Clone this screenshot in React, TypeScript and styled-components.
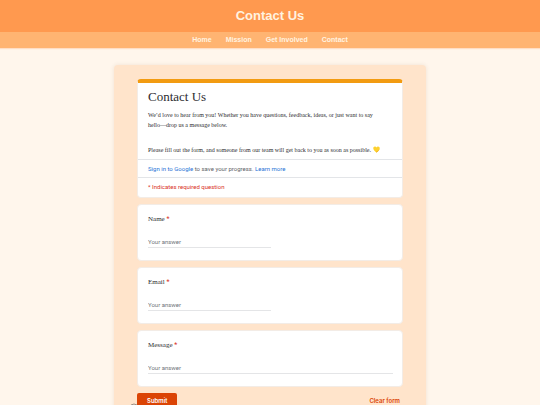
import React from "react";
import styled, { createGlobalStyle } from "styled-components";

const GlobalStyle = createGlobalStyle`
  *, *::before, *::after { box-sizing: border-box; }
  html { scrollbar-width: none; }
  body {
    margin: 0;
    background: #fff6ec;
    font-family: "Liberation Sans", Arial, sans-serif;
  }
`;

const Header = styled.header`
  display: flex;
  align-items: center;
  justify-content: center;
  height: 32px;
  background: #ff994f;
`;

const SiteTitle = styled.h1`
  margin: 0;
  color: #fff3e0;
  font-size: 13px;
  line-height: 16px;
  font-weight: 700;
`;

const Nav = styled.nav`
  display: flex;
  align-items: center;
  justify-content: center;
  gap: 14px;
  height: 16px;
  background: #ffb472;
  box-shadow: 0 1px 1px rgba(255, 153, 79, 0.25);
`;

const NavLink = styled.a`
  color: #fff3e0;
  font-size: 7px;
  line-height: 16px;
  font-weight: 700;
  text-decoration: none;
`;

const Main = styled.main`
  padding: 17px 16px;
`;

const Panel = styled.section`
  max-width: 312px;
  margin: 0 auto;
  padding: 14px 23px 24px;
  border-radius: 4px;
  background: #ffe4cb;
  box-shadow: 0 0 4px rgba(120, 70, 30, 0.12);
`;

const Form = styled.form`
  display: flex;
  flex-direction: column;
  gap: 6px;
`;

const Card = styled.div`
  overflow: hidden;
  border: 1px solid #f3ece6;
  border-radius: 4px;
  background: #fff;
`;

const IntroCard = styled(Card)`
  border-top: 4px solid #f29b11;
`;

const Intro = styled.div`
  padding: 5px 18px 4px 10px;
  color: #2c2c30;
  font-family: "Liberation Serif", "Times New Roman", serif;
`;

const FormTitle = styled.h2`
  margin: 0 0 4px;
  font-size: 13px;
  line-height: 18px;
  font-weight: 400;
`;

const Copy = styled.p<{ $spaced?: boolean }>`
  margin: ${(p) => (p.$spaced ? "15px 0 0" : "0")};
  font-size: 6px;
  line-height: 10px;
`;

const HeartIcon = styled.svg`
  display: inline-block;
  width: 7px;
  height: 7px;
  margin-left: 2px;
  vertical-align: -1px;
`;

const Note = styled.div<{ $required?: boolean }>`
  padding: ${(p) => (p.$required ? "4px 10px 5px" : "4px 10px 3px")};
  border-top: 1px solid #e3e5e8;
  color: ${(p) => (p.$required ? "#d93025" : "#5f6368")};
  font-family: Roboto, sans-serif;
  font-size: 6px;
  line-height: 10px;
`;

const TextLink = styled.a`
  color: #2a73d6;
  text-decoration: none;
`;

const QuestionCard = styled(Card)`
  display: flex;
  flex-direction: column;
  align-items: flex-start;
  gap: 12px;
  padding: 9px 9px 12px 10px;
`;

const Label = styled.label`
  color: #2c2c30;
  font-family: "Liberation Serif", "Times New Roman", serif;
  font-size: 7px;
  line-height: 10px;
`;

const Star = styled.span`
  color: #d93025;
  font-family: Roboto, sans-serif;
`;

const Answer = styled.input<{ $long?: boolean }>`
  display: block;
  width: ${(p) => (p.$long ? "100%" : "50%")};
  height: 12px;
  padding: 0;
  border: 0;
  border-bottom: 1px solid #e4e5e7;
  border-radius: 0;
  outline: 0;
  background: transparent;
  color: #202124;
  font-family: Roboto, sans-serif;
  font-size: 6px;
  line-height: 10px;

  &::placeholder {
    color: #70757a;
    opacity: 1;
  }
`;

const Actions = styled.div`
  position: relative;
  z-index: 0;
  display: flex;
  align-items: center;
  justify-content: space-between;
`;

const Button = styled.button<{ $primary?: boolean }>`
  height: 15px;
  padding: ${(p) => (p.$primary ? "0 10px" : "0 3px")};
  border: 0;
  border-radius: 2px;
  background: ${(p) => (p.$primary ? "#db4405" : "transparent")};
  color: ${(p) => (p.$primary ? "#fff" : "#db4405")};
  font-family: Inter, sans-serif;
  font-size: 6px;
  line-height: 15px;
  font-weight: 600;
`;

const InfoIcon = styled.svg`
  position: absolute;
  top: 10px;
  left: -8px;
  z-index: -1;
  width: 10px;
  height: 10px;
`;

const links = ["Home", "Mission", "Get Involved", "Contact"];

const questions = [
  { id: "name", label: "Name", type: "text", long: false },
  { id: "email", label: "Email", type: "email", long: false },
  { id: "message", label: "Message", type: "text", long: true },
];

export default function App() {
  return (
    <>
      <GlobalStyle />
      <Header>
        <SiteTitle>Contact Us</SiteTitle>
      </Header>
      <Nav>
        {links.map((link) => (
          <NavLink key={link} href="#">
            {link}
          </NavLink>
        ))}
      </Nav>
      <Main>
        <Panel>
          <Form onSubmit={(e) => e.preventDefault()}>
            <IntroCard>
              <Intro>
                <FormTitle>Contact Us</FormTitle>
                <Copy>
                  We’d love to hear from you! Whether you have questions, feedback, ideas, or just want to say
                  hello—drop us a message below.
                </Copy>
                <Copy $spaced>
                  Please fill out the form, and someone from our team will get back to you as soon as possible.
                  <HeartIcon viewBox="0 0 14 14" aria-hidden="true">
                    <path
                      d="M7 13C4.500 11 .5 8 .5 4.500.5 2.500 2 1 3.900 1 5.300 1 6.500 1.800 7 3c.5-1.200 1.700-2 3.100-2 1.900 0 3.400 1.500 3.400 3.500C13.500 8 9.500 11 7 13Z"
                      fill="#fdd12f"
                    />
                    <path d="M7 13c2.500-2 6.500-5 6.500-8.500C12.500 8 9.500 10 5.500 11.800Z" fill="#eda91c" />
                  </HeartIcon>
                </Copy>
              </Intro>
              <Note>
                <TextLink href="#">Sign in to Google</TextLink> to save your progress.{" "}
                <TextLink href="#">Learn more</TextLink>
              </Note>
              <Note $required>* Indicates required question</Note>
            </IntroCard>
            {questions.map((q) => (
              <QuestionCard key={q.id}>
                <Label htmlFor={q.id}>
                  {q.label} <Star>*</Star>
                </Label>
                <Answer id={q.id} type={q.type} placeholder="Your answer" $long={q.long} required />
              </QuestionCard>
            ))}
            <Actions>
              <InfoIcon viewBox="0 0 10 10" aria-hidden="true">
                <circle cx="5" cy="5" r="4" fill="none" stroke="#9c8f84" />
                <path d="M5 4.500V7M5 2.800v.8" stroke="#9c8f84" />
              </InfoIcon>
              <Button type="submit" $primary>
                Submit
              </Button>
              <Button type="reset">Clear form</Button>
            </Actions>
          </Form>
        </Panel>
      </Main>
    </>
  );
}
